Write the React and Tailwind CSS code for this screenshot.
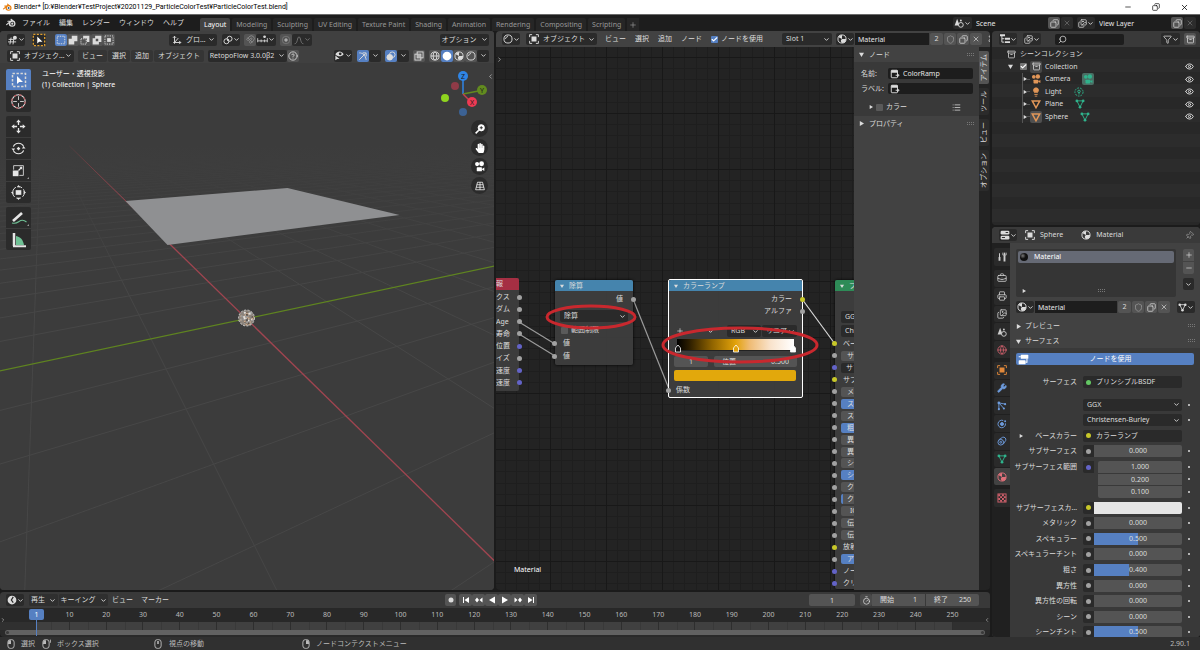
import React, { useState } from "react";
import { clsx } from "clsx";
import {
  Archive,
  BriefcaseBusiness,
  Check as CheckIcon,
  ChevronDown,
  ChevronLeft,
  ChevronRight,
  CircleHelp,
  Copy,
  Eye,
  Filter,
  Globe,
  Images,
  Lightbulb,
  List,
  Magnet,
  Minus,
  Pin,
  Plus,
  Printer,
  Search,
  Shield,
  Timer,
  Wrench,
  X,
} from "lucide-react";
import { FaHandPaper } from "react-icons/fa";

/* ---------- icons ---------- */

function Svg({ children, className = "size-[10px]" }) {
  return (
    <svg
      viewBox="0 0 16 16"
      className={clsx("shrink-0", className)}
      fill="none"
      stroke="currentColor"
      strokeWidth="1.5"
      aria-hidden="true"
    >
      {children}
    </svg>
  );
}

const BlenderLogo = ({ className, color = "currentColor", hole = "#1d1d1d", eye = "currentColor" }) => (
  <Svg className={className}>
    <path d="M1 10.5L9 4M3 5.2h8M8 2l5.2 4" stroke={color} strokeWidth="1.8" strokeLinecap="round" />
    <ellipse cx="9.8" cy="9" rx="5.4" ry="4.8" fill={color} stroke="none" />
    <circle cx="10" cy="9" r="3.1" fill={hole} stroke="none" />
    <circle cx="10" cy="9" r="1.7" fill={eye} stroke="none" />
  </Svg>
);

const ViewportIcon = () => (
  <Svg>
    <path d="M1 7h9M0 11h13M5 4L3 15M9 8l-1 7" />
    <circle cx="11" cy="4.5" r="3.2" fill="currentColor" stroke="none" />
  </Svg>
);

const ObjectModeIcon = ({ className }) => (
  <Svg className={className}>
    <path d="M1 5V1h4M11 1h4v4M15 11v4h-4M5 15H1v-4" />
    <rect x="4" y="4" width="8" height="8" fill="currentColor" stroke="none" />
  </Svg>
);

const SelectBoxIcon = ({ className = "size-[13px]", dash = "#d8d8d8" }) => (
  <Svg className={className}>
    <rect x="1.5" y="1.5" width="13" height="13" stroke={dash} strokeDasharray="2.4 1.6" />
    <path d="M6 4v8l2.2-2H12z" fill="#fff" stroke="none" />
  </Svg>
);

const DashedBox = () => (
  <Svg>
    <rect x="2" y="2" width="12" height="12" strokeDasharray="2.4 1.6" />
  </Svg>
);
const UnionIcon = () => (
  <Svg>
    <path d="M6 1h9v9h-5v5H1V6h5z" fill="currentColor" stroke="none" />
  </Svg>
);
const SubtractIcon = () => (
  <Svg>
    <rect x="1.5" y="6" width="8.5" height="8.5" strokeDasharray="2 1.5" />
    <path d="M5 1h10v10h-4V5H5z" fill="currentColor" stroke="none" />
  </Svg>
);
const InvertIcon = () => (
  <Svg>
    <path d="M5 1h10v10h-4v4H1V5h4zM6 6v4h4V6z" fill="currentColor" fillRule="evenodd" stroke="none" />
  </Svg>
);
const IntersectIcon = () => (
  <Svg>
    <rect x="1.5" y="1.5" width="13" height="13" strokeDasharray="2 1.8" />
    <rect x="5" y="5" width="6" height="6" fill="currentColor" stroke="none" />
  </Svg>
);

const AxesIcon = () => (
  <Svg>
    <path d="M4 14V2M1.500 4.500L4 2l2.500 2.500M2 12h12M11.500 9.500L14 12l-2.500 2.500M4 12l6-7" />
  </Svg>
);
const PivotIcon = () => (
  <Svg>
    <circle cx="5.500" cy="10" r="4" />
    <circle cx="10.500" cy="6" r="4" />
    <circle cx="8" cy="8" r="1.500" fill="currentColor" stroke="none" />
  </Svg>
);
const IncrementIcon = () => (
  <Svg className="size-[11px]">
    <path d="M1 6v6M6 8v4M11 8v4M15 6v6M1 10h14" strokeWidth="1.200" />
    <circle cx="11" cy="4" r="1.200" fill="currentColor" />
  </Svg>
);
const ProportionalIcon = () => (
  <Svg>
    <circle cx="8" cy="8" r="6" opacity=".4" />
    <circle cx="8" cy="8" r="2" fill="currentColor" />
  </Svg>
);
const FalloffIcon = () => (
  <Svg>
    <path d="M1 14c5 0 4-11 7-11s2 11 7 11" />
  </Svg>
);
const VisibilityIcon = () => (
  <Svg className="size-[11px]">
    <path d="M2 6c3-5 9-5 12 0-3 4-9 4-12 0z" fill="currentColor" stroke="none" />
    <circle cx="9" cy="5.500" r="2" fill="#2a2a2a" stroke="none" />
    <path d="M2 8v7l2.500-2H8z" fill="currentColor" stroke="none" />
  </Svg>
);
const GizmoIcon = () => (
  <Svg>
    <path d="M2 3c6 0 10 4 11 11M2 14L12 4M7.500 3H13v5.500" />
  </Svg>
);
const OverlayIcon = () => (
  <Svg>
    <circle cx="6" cy="10" r="4.500" fill="currentColor" />
    <circle cx="10" cy="6" r="4.500" />
  </Svg>
);
const XrayIcon = () => (
  <Svg>
    <rect x="1.500" y="5" width="9.500" height="9.500" />
    <rect x="5" y="1.500" width="9.500" height="9.500" />
    <path d="M8 5v6M5 8h6" />
  </Svg>
);
const WireIcon = () => (
  <Svg>
    <circle cx="8" cy="8" r="6.500" />
    <ellipse cx="8" cy="8" rx="3" ry="6.500" />
    <path d="M1.500 8h13" />
  </Svg>
);
const SolidIcon = () => (
  <Svg>
    <circle cx="8" cy="8" r="7" fill="currentColor" stroke="none" />
  </Svg>
);
const MaterialIcon = ({ className }) => (
  <Svg className={className}>
    <circle cx="8" cy="8" r="6.500" />
    <path d="M8 1.500v6.500h6.500A6.500 6.500 0 0 1 8 14.500C6 12 5 10 8 8L2.500 5A6.500 6.500 0 0 1 8 1.500z" fill="currentColor" stroke="none" />
  </Svg>
);
const RenderedIcon = ({ className }) => (
  <Svg className={className}>
    <circle cx="8" cy="8" r="6.500" />
    <path d="M4 8c0-2 2-4 4-4" />
  </Svg>
);
const SceneIcon = () => (
  <Svg>
    <path d="M5 1L1 12h8z" fill="currentColor" stroke="none" />
    <circle cx="11" cy="11" r="3.800" fill="#2a2a2a" />
    <circle cx="11" cy="4" r="1.500" fill="currentColor" stroke="none" />
  </Svg>
);
const OutlinerIcon = () => (
  <Svg>
    <path d="M3 2v11h4M3 7.500h4" />
    <path d="M0 2h8M8 7.500h8M8 13h8" strokeWidth="3" />
  </Svg>
);
const PropsIcon = () => (
  <Svg>
    <rect x="1" y="1" width="14" height="6" rx="2" fill="currentColor" stroke="none" />
    <rect x="1" y="9" width="14" height="6" rx="2" fill="currentColor" stroke="none" />
    <path d="M9 4h4M3 12h5" stroke="#2a2a2a" />
  </Svg>
);
const NodeIcon = ({ className }) => (
  <Svg className={className}>
    <rect x="2" y="2" width="10" height="12" rx="1" />
    <path d="M2 4h10" strokeWidth="4" />
    <path d="M9 10h6M13 8v4" />
  </Svg>
);
const NodeTreeIcon = () => (
  <Svg className="size-[11px]">
    <rect x="4" y="1" width="11" height="6" rx="1" fill="currentColor" stroke="none" />
    <rect x="1" y="9" width="10" height="6" rx="1" fill="currentColor" stroke="none" />
    <path d="M1 4h3M11 12h2V7" />
  </Svg>
);
const MovieCamera = ({ className }) => (
  <Svg className={className}>
    <g fill="currentColor" stroke="none">
      <circle cx="4.500" cy="4.500" r="3" />
      <circle cx="11" cy="4" r="3.500" />
      <rect x="4" y="9" width="7.500" height="6" rx="1" />
      <path d="M11 12l4-2.500v5z" />
    </g>
  </Svg>
);
const LightData = ({ className }) => (
  <Svg className={className}>
    <circle cx="8" cy="8" r="6.500" strokeDasharray="3 1.500" />
    <circle cx="8" cy="7" r="2" />
    <path d="M8 9v3" />
  </Svg>
);
const MeshObject = ({ className }) => (
  <Svg className={className}>
    <path d="M2 3h12L8 14z" strokeWidth="2.400" />
  </Svg>
);
const MeshData = ({ className }) => (
  <Svg className={className}>
    <path d="M3 3h10L8 13z" />
    <g fill="currentColor" stroke="none">
      <circle cx="3" cy="3" r="2.200" />
      <circle cx="13" cy="3" r="2.200" />
      <circle cx="8" cy="13" r="2.200" />
    </g>
  </Svg>
);
const ToolTab = () => (
  <Svg>
    <path d="M4 2v6M12 1v5" strokeWidth="1.600" />
    <path d="M4 8v6M12 6v9" strokeWidth="3" />
    <path d="M9.500 1v4h5V1" />
  </Svg>
);
const ParticleTab = () => (
  <Svg>
    <path d="M3 3v10M3 3l10 2M3 3l8 9" />
    <g fill="currentColor" stroke="none">
      <circle cx="3" cy="3" r="2.200" />
      <circle cx="13" cy="5" r="1.700" />
      <circle cx="11" cy="12" r="1.700" />
      <circle cx="3" cy="13" r="1.700" />
    </g>
  </Svg>
);
const PhysicsTab = () => (
  <Svg>
    <path d="M10 2.500A6 6 0 1 0 13.500 7" />
    <circle cx="8" cy="8" r="2.400" fill="currentColor" />
    <circle cx="13" cy="3.500" r="1.600" fill="currentColor" stroke="none" />
  </Svg>
);
const ConstraintTab = () => (
  <Svg>
    <circle cx="6" cy="10" r="4.500" />
    <circle cx="6" cy="10" r="1.500" />
    <path d="M3 6l6-4a4 4 0 0 1 5 5l-4 6" />
  </Svg>
);
const TextureTab = () => (
  <Svg>
    <rect x="1.500" y="1.500" width="13" height="13" />
    <path
      d="M2 2h3v3H2zM8 2h3v3H8zM5 5h3v3H5zM11 5h3v3h-3zM2 8h3v3H2zM8 8h3v3H8zM5 11h3v3H5zM11 11h3v3h-3z"
      fill="currentColor"
      stroke="none"
    />
  </Svg>
);
const MouseIcon = ({ button, drag }) => (
  <Svg className="size-[10px]">
    <rect x="3" y="1" width="10" height="14" rx="4" />
    {button === "left" && <path d="M4 2h4v6H3z" fill="currentColor" stroke="none" />}
    {button === "right" && <path d="M8 2h4l1 6H8z" fill="currentColor" stroke="none" />}
    {button === "middle" && <path d="M8 3v5" strokeWidth="2.500" />}
    {drag && <path d="M15 1v5" />}
  </Svg>
);

/* ---------- small controls ---------- */

const Caret = () => <ChevronDown className="size-[7px] shrink-0" strokeWidth={3} />;

function Btn({ children, label, className }) {
  return (
    <button
      type="button"
      aria-label={label}
      className={clsx("flex h-3 shrink-0 items-center justify-center rounded-xs whitespace-nowrap", className)}
    >
      {children}
    </button>
  );
}

function IconMenu({ label, children, className = "w-[18px]" }) {
  return (
    <Btn label={label} className={clsx("bg-[#2a2a2a]", className)}>
      {children}
      <Caret />
    </Btn>
  );
}

function Select({ label, value, icon, className, pad = "pl-1" }) {
  return (
    <span className={clsx("relative flex h-3 shrink-0 items-center rounded-xs bg-[#2a2a2a]", className)}>
      {icon && <span className="pl-[3px]">{icon}</span>}
      <select
        aria-label={label}
        className={clsx("h-full min-w-0 flex-1 appearance-none truncate bg-transparent pr-2 outline-none", pad)}
      >
        <option>{value}</option>
      </select>
      <span className="pointer-events-none absolute right-[2px]">
        <Caret />
      </span>
    </span>
  );
}

function Checkbox({ label, checked = false, children, box = "bg-[#5a5a5a] checked:bg-[#5680c2]" }) {
  const [on, setOn] = useState(checked);
  return (
    <label className="flex items-center gap-[3px] whitespace-nowrap">
      <span className="relative flex size-[7px]">
        <input
          type="checkbox"
          aria-label={label}
          checked={on}
          onChange={() => setOn(!on)}
          className={clsx("size-[7px] appearance-none rounded-[1px]", box)}
        />
        {on && <CheckIcon className="pointer-events-none absolute inset-0 size-[7px] text-white" strokeWidth={4} />}
      </span>
      {children}
    </label>
  );
}

function IdBlock({ label, name, users, faded, icon, iconWidth, className }) {
  return (
    <div className={clsx("flex h-3 items-center gap-px", className)}>
      <IconMenu label={`${label} browse`} className={iconWidth}>
        {icon}
      </IconMenu>
      <input
        aria-label={label}
        defaultValue={name}
        className="h-3 w-0 min-w-0 flex-1 bg-[#1d1d1d] px-[3px] text-[#e6e6e6] outline-none"
      />
      {users && (
        <>
          <Btn label="users" className="w-[13px] rounded-none bg-[#545454]">
            {users}
          </Btn>
          <Btn label="fake user" className="w-3 rounded-none bg-[#545454] text-[#999]">
            <Shield className="size-[9px]" />
          </Btn>
        </>
      )}
      <Btn label="duplicate" className="w-3 rounded-none bg-[#545454]">
        <Copy className="size-[9px] -scale-x-100" />
      </Btn>
      <Btn label="unlink" className={clsx("w-3", faded ? "bg-[#2c2c2c] text-[#777]" : "bg-[#545454]")}>
        <X className="size-2" />
      </Btn>
    </div>
  );
}

const Grip = () => (
  <svg className="h-[4px] w-2 shrink-0 text-[#777]" viewBox="0 0 8 4" fill="currentColor" aria-hidden="true">
    <path d="M0 0h1v1H0zM2 0h1v1H2zM4 0h1v1H4zM6 0h1v1H6zM0 2h1v1H0zM2 2h1v1H2zM4 2h1v1H4zM6 2h1v1H6z" />
  </svg>
);

const Tri = ({ open, className = "size-[5px]" }) => (
  <svg className={clsx("shrink-0", className)} viewBox="0 0 6 6" fill="currentColor" aria-hidden="true">
    <path d={open ? "M0 1h6L3 6z" : "M1 0l5 3-5 3z"} />
  </svg>
);

/* ---------- window chrome ---------- */

function TitleBar() {
  return (
    <div className="flex h-[14px] shrink-0 items-center bg-white px-[3px] text-black">
      <BlenderLogo className="size-[9px]" color="#e87d0d" hole="#fff" eye="#265787" />
      <span className="ml-[2px] [font-family:Roboto,'Noto_Sans_CJK_JP',sans-serif] text-[7px]">
        Blender* [D:¥Blender¥TestProject¥20201129_ParticleColorTest¥ParticleColorTest.blend]
      </span>
      <div className="ml-auto flex items-center gap-5 pr-2">
        <button type="button" aria-label="Minimize">
          <Minus className="size-2" />
        </button>
        <button type="button" aria-label="Restore">
          <Copy className="size-2 -scale-x-100" />
        </button>
        <button type="button" aria-label="Close">
          <X className="size-[9px]" />
        </button>
      </div>
    </div>
  );
}

const WORKSPACES = [
  "Layout",
  "Modeling",
  "Sculpting",
  "UV Editing",
  "Texture Paint",
  "Shading",
  "Animation",
  "Rendering",
  "Compositing",
  "Scripting",
];

function TopBar() {
  return (
    <div className="flex h-[17px] shrink-0 items-center border-t border-[#6a6a6a] bg-[#1d1d1d] pr-1">
      <nav className="flex items-center gap-[9px] pl-[6px]">
        <button type="button" aria-label="Blender" className="-mr-[3px]">
          <BlenderLogo />
        </button>
        {["ファイル", "編集", "レンダー", "ウィンドウ", "ヘルプ"].map((m) => (
          <button type="button" key={m} className="whitespace-nowrap">
            {m}
          </button>
        ))}
      </nav>
      <div className="ml-4 flex items-end gap-[2px] self-end">
        {WORKSPACES.map((w, i) => (
          <button
            type="button"
            key={w}
            className={clsx(
              "h-[13px] rounded-t-xs px-1 whitespace-nowrap",
              i === 0 ? "bg-[#424242] text-white" : "bg-[#262626] text-[#989898]"
            )}
          >
            {w}
          </button>
        ))}
        <button type="button" aria-label="Add workspace" className="flex h-[13px] w-3 items-center justify-center bg-[#262626] text-[#989898]">
          <Plus className="size-2" />
        </button>
      </div>
      <div className="ml-auto flex gap-1">
        <IdBlock label="Scene" name="Scene" faded icon={<SceneIcon />} iconWidth="w-[19px]" className="w-[120px]" />
        <IdBlock label="View Layer" name="View Layer" faded icon={<Images className="size-[9px]" />} iconWidth="w-[18px]" className="w-[119px]" />
      </div>
    </div>
  );
}

/* ---------- 3D viewport ---------- */

// perspective grid: points along each ground axis, joined to the other axis' vanishing point
const ORIGIN = [247, 318];
const VP_X = [42, 120];
const VP_Y = [1158, 121];

function along(vp, t) {
  return [vp[0] + (ORIGIN[0] - vp[0]) / (1 + t), vp[1] + (ORIGIN[1] - vp[1]) / (1 + t)];
}

function gridLine(vp, p) {
  const far = 12;
  return {
    x1: vp[0] + (p[0] - vp[0]) * 0.1,
    y1: vp[1] + (p[1] - vp[1]) * 0.1,
    x2: vp[0] + (p[0] - vp[0]) * far,
    y2: vp[1] + (p[1] - vp[1]) * far,
  };
}

const GRID = [];
for (let k = -7; k <= 50; k++) {
  if (k !== 0) GRID.push(gridLine(VP_X, along(VP_Y, k * 0.095)));
}
for (let k = -6; k <= 60; k++) {
  if (k !== 0) GRID.push(gridLine(VP_Y, along(VP_X, k * 0.11)));
}

const SPECKLES = [];
for (let i = 0; i < 60; i++) {
  const r = 7 * Math.sqrt(((i * 37) % 60) / 60);
  const a = i * i * 1.3;
  SPECKLES.push({ x: 247 + r * Math.cos(a), y: 318 + r * Math.sin(a), c: ["#e8e4de", "#57504a", "#c9a98c", "#9a9a9a"][i % 4] });
}

function Scene3D() {
  return (
    <svg className="absolute inset-0 size-full" viewBox="0 31 495 559" preserveAspectRatio="xMidYMid slice" aria-hidden="true">
      <defs>
        <linearGradient id="fade" x1="0" y1="145" x2="0" y2="290" gradientUnits="userSpaceOnUse">
          <stop offset="0" stopColor="#3c3c3c" />
          <stop offset="1" stopColor="#3c3c3c" stopOpacity="0" />
        </linearGradient>
        <linearGradient id="xaxis" x1="70" y1="146" x2="160" y2="234" gradientUnits="userSpaceOnUse">
          <stop offset="0" stopColor="#a04048" stopOpacity=".15" />
          <stop offset=".6" stopColor="#a04550" />
        </linearGradient>
      </defs>
      <rect x="0" y="31" width="495" height="559" fill="#3c3c3c" />
      <g stroke="#474747" strokeWidth="1">
        {GRID.map((l, i) => (
          <line key={i} {...l} />
        ))}
      </g>
      <rect x="0" y="31" width="495" height="259" fill="url(#fade)" />
      <line x1="70" y1="146" x2="160" y2="234" stroke="url(#xaxis)" />
      <line x1="0" y1="371" x2="495" y2="266" stroke="#5f8420" strokeWidth="1.200" />
      <line x1="160" y1="234" x2="495" y2="561" stroke="#a04550" strokeWidth="1.300" />
      <path d="M126 201L288 188L400 215L168 245z" fill="#8f9092" />
      <circle cx="247" cy="318" r="8" fill="#8b837b" />
      {SPECKLES.map((s, i) => (
        <circle key={i} cx={s.x} cy={s.y} r="1" fill={s.c} />
      ))}
      <circle cx="247" cy="318" r="8" fill="none" stroke="#ddd" strokeWidth=".8" strokeDasharray="2 1.500" />
    </svg>
  );
}

function AxisGizmo() {
  return (
    <svg className="absolute top-[38px] right-[6px] h-[50px] w-[50px]" viewBox="438 69 50 50" aria-label="Axis gizmo">
      <path d="M463 94V76" stroke="#2f85e6" strokeWidth="1.500" />
      <path d="M463 94l18-3.500" stroke="#628b1f" strokeWidth="1.500" />
      <path d="M463 94l8 8" stroke="#c8404f" strokeWidth="1.500" />
      <circle cx="455" cy="86" r="4" fill="#8f3b47" />
      <circle cx="445" cy="98" r="4" fill="#8fd41f" />
      <circle cx="463" cy="112" r="4" fill="#3c6294" />
      <circle cx="463" cy="76" r="5" fill="#2f85e6" />
      <circle cx="482" cy="90" r="5" fill="#628b1f" />
      <circle cx="472" cy="102" r="5" fill="#ee3a53" />
      <g fontSize="7" textAnchor="middle" fill="#1b1b1b">
        <text x="463" y="79">Z</text>
        <text x="482" y="93">Y</text>
        <text x="472" y="105">X</text>
      </g>
    </svg>
  );
}

const Cursor3D = () => (
  <Svg className="size-[17px]">
    <circle cx="8" cy="8" r="6.300" stroke="#e8e8e8" strokeWidth="1" />
    <circle cx="8" cy="8" r="6.300" stroke="#b5484d" strokeWidth="1" strokeDasharray="2.500 2.500" />
    <path d="M8 3v3.500M8 9.500V13M3 8h3.500M9.500 8H13" strokeWidth=".8" />
  </Svg>
);
const MoveTool = () => (
  <Svg className="size-[15px]">
    <path d="M8 3v3.500M8 9.500V13M3 8h3.500M9.500 8H13" strokeWidth="1.400" />
    <path d="M8 .5l2.500 3h-5zM8 15.500l-2.500-3h5zM.5 8l3-2.500v5zM15.500 8l-3 2.500v-5z" fill="currentColor" stroke="none" />
  </Svg>
);
const RotateTool = () => (
  <Svg className="size-[15px]">
    <path d="M2.500 6a6 6 0 0 1 11 0M13.500 10a6 6 0 0 1-11 0" strokeWidth="1.300" />
    <path d="M8 6l2 2-2 2-2-2zM.5 8h4L2.500 10.500zM11.500 8h4l-2-2.500z" fill="currentColor" stroke="none" />
  </Svg>
);
const ScaleTool = () => (
  <Svg className="size-[13px]">
    <path d="M2 7V2h12v12H9" strokeWidth="1" />
    <rect x="1" y="8" width="7" height="7" fill="currentColor" stroke="none" />
    <path d="M8 8l4-4" />
    <path d="M9 3.500h3.500V7z" fill="currentColor" stroke="none" />
  </Svg>
);
const TransformTool = () => (
  <Svg className="size-[15px]">
    <circle cx="8" cy="8" r="6.300" strokeWidth="1" strokeDasharray="5 2" />
    <rect x="5" y="5.500" width="6" height="5" fill="currentColor" stroke="none" />
    <path d="M8 0l1.800 2.500H6.200zM8 16l-1.800-2.500h3.600zM0 8l2.500-1.800v3.600zM16 8l-2.500 1.800V6.200z" fill="currentColor" stroke="none" />
  </Svg>
);
const AnnotateTool = () => (
  <Svg className="size-[16px]">
    <path d="M2 11l9-8" strokeWidth="2.600" />
    <path d="M1 13c4 1 5 0 7-1.500S12 9 15.500 12" stroke="#6fc195" strokeWidth="1.100" />
  </Svg>
);
const MeasureTool = () => (
  <Svg className="size-[16px]">
    <path d="M5 4c5 1 7 4 8 9H5z" fill="#6fc195" stroke="none" />
    <path d="M3 1v13" strokeWidth="2.500" />
    <path d="M2 14.200h13" strokeWidth="2" />
  </Svg>
);

const TOOL_GROUPS = [
  [
    ["Select Box", <SelectBoxIcon className="size-[16px]" />],
    ["Cursor", <Cursor3D />],
  ],
  [
    ["Move", <MoveTool />],
    ["Rotate", <RotateTool />],
    ["Scale", <ScaleTool />],
    ["Transform", <TransformTool />],
  ],
  [
    ["Annotate", <AnnotateTool />],
    ["Measure", <MeasureTool />],
  ],
];

// tools with more variants behind a long press
const HAS_VARIANTS = ["Scale", "Annotate"];

function Toolbar() {
  return (
    <div className="flex w-[25px] flex-col gap-1">
      {TOOL_GROUPS.map((group, g) => (
        <div key={g} className="flex flex-col gap-px overflow-hidden rounded-xs">
          {group.map(([name, icon], i) => (
            <button
              type="button"
              key={name}
              aria-label={name}
              className={clsx(
                "relative flex h-[21px] items-center justify-center text-[#e6e6e6]",
                g === 0 && i === 0 ? "bg-[#5680c2]" : "bg-[#2b2b2b]"
              )}
            >
              {icon}
              {HAS_VARIANTS.includes(name) && (
                <svg className="absolute right-[2px] bottom-[2px] size-[2px]" viewBox="0 0 2 2" aria-hidden="true">
                  <path d="M2 0v2H0z" fill="#999" />
                </svg>
              )}
            </button>
          ))}
        </div>
      ))}
    </div>
  );
}

function Viewport() {
  const nav = [
    ["Zoom", <Svg><circle cx="10" cy="6" r="5" fill="currentColor" /><path d="M6 10l-5 5" strokeWidth="2.500" /><path d="M10 3.500v5M7.500 6h5" stroke="#2b2b2b" /></Svg>],
    ["Pan", <FaHandPaper className="size-[10px]" />],
    ["Camera", <MovieCamera className="size-[11px]" />],
    ["Perspective", <Svg><path d="M4 2h8l3 12H1zM8 2v12M3 6h10M2 10h12" strokeWidth="1.200" /></Svg>],
  ];
  return (
    <section className="relative flex w-0 flex-1 flex-col overflow-hidden rounded-sm bg-[#3c3c3c]">
      <Scene3D />
      <AxisGizmo />
      <div className="relative flex h-[17px] items-center bg-[#404040] pr-[5px] pl-[7px]">
        <IconMenu label="Editor type">
          <ViewportIcon />
        </IconMenu>
        <Btn label="Active tool" className="ml-[7px] bg-[#2a2a2a]">
          <SelectBoxIcon className="size-[14px]" dash="#e0a030" />
        </Btn>
        <div className="ml-[9px] flex">
          {[<DashedBox />, <UnionIcon />, <SubtractIcon />, <InvertIcon />, <IntersectIcon />].map((icon, i) => (
            <Btn key={i} label={`Select mode ${i + 1}`} className={clsx("w-3 rounded-none", i === 0 ? "bg-[#5680c2]" : "bg-[#545454]")}>
              {icon}
            </Btn>
          ))}
        </div>
        <Select label="Transform orientation" value="グロー…" icon={<AxesIcon />} className="ml-[54px] w-[48px]" />
        <IconMenu label="Pivot point" className="ml-[5px] w-[18px]">
          <PivotIcon />
        </IconMenu>
        <Btn label="Snap" className="ml-1 w-3 bg-[#545454] text-[#999]">
          <Magnet className="size-[9px]" />
        </Btn>
        <IconMenu label="Snap to" className="w-5">
          <IncrementIcon />
        </IconMenu>
        <Btn label="Proportional editing" className="ml-1 w-3 bg-[#545454] text-[#aaa]">
          <ProportionalIcon />
        </Btn>
        <IconMenu label="Falloff" className="w-5 text-[#777]">
          <FalloffIcon />
        </IconMenu>
        <Btn className="ml-auto w-[49px] gap-1 bg-[#2a2a2a]">
          オプション
          <Caret />
        </Btn>
      </div>
      <div className="relative flex h-[15px] items-center bg-[#404040] pr-[5px] pl-[7px]">
        <Select label="Mode" value="オブジェク…" icon={<ObjectModeIcon />} className="w-[67px]" />
        <div className="ml-1 flex gap-px">
          {["ビュー", "選択", "追加", "オブジェクト"].map((m) => (
            <Btn key={m} className="bg-[#353535] px-1">
              {m}
            </Btn>
          ))}
        </div>
        <Btn className="ml-1 w-[79px] gap-1 bg-[#2a2a2a]">
          RetopoFlow 3.0.0β2
          <Caret />
        </Btn>
        <Btn label="Help" className="w-3 bg-[#545454]">
          <CircleHelp className="size-[10px]" />
        </Btn>
        <IconMenu label="Visibility" className="ml-auto w-[18px]">
          <VisibilityIcon />
        </IconMenu>
        <Btn label="Gizmos" className="ml-[5px] w-3 bg-[#5680c2]">
          <GizmoIcon />
        </Btn>
        <Btn label="Gizmo options" className="w-3 bg-[#2a2a2a]">
          <Caret />
        </Btn>
        <Btn label="Overlays" className="ml-1 w-3 bg-[#5680c2]">
          <OverlayIcon />
        </Btn>
        <Btn label="Overlay options" className="w-3 bg-[#2a2a2a]">
          <Caret />
        </Btn>
        <Btn label="X-ray" className="ml-1 w-3 bg-[#545454]">
          <XrayIcon />
        </Btn>
        <div className="ml-1 flex">
          {[<WireIcon />, <SolidIcon />, <MaterialIcon />, <RenderedIcon />].map((icon, i) => (
            <Btn key={i} label={`Shading ${i + 1}`} className={clsx("w-3 rounded-none", i === 1 ? "bg-[#5680c2] text-white" : "bg-[#545454]")}>
              {icon}
            </Btn>
          ))}
          <Btn label="Shading options" className="w-3 bg-[#2a2a2a]">
            <Caret />
          </Btn>
        </div>
      </div>
      <div className="relative flex pt-[6px] pr-[6px] pl-[6px]">
        <Toolbar />
        <div className="ml-[11px] text-white">
          <p className="h-[10px]">ユーザー・透視投影</p>
          <p className="mt-px h-[10px]">(1) Collection | Sphere</p>
        </div>
        <div className="mt-[51px] ml-auto flex flex-col gap-[2px]">
          {nav.map(([name, icon]) => (
            <button type="button" key={name} aria-label={name} className="flex size-[17px] items-center justify-center rounded-full bg-[#2b2b2b] text-white">
              {icon}
            </button>
          ))}
        </div>
      </div>
      <ChevronLeft className="absolute top-[42px] right-0 size-[7px]" />
    </section>
  );
}

/* ---------- shader editor ---------- */

const SOCKET = { grey: "bg-[#a1a1a1]", yellow: "bg-[#c7c729]", blue: "bg-[#6363c7]", green: "bg-[#63c763]" };

function Socket({ color = "grey", side }) {
  return (
    <span
      className={clsx(
        "size-[5px] shrink-0 rounded-full",
        SOCKET[color],
        side === "left" && "absolute -left-[3px]",
        side === "right" && "absolute -right-[3px]"
      )}
    />
  );
}

function NodeHeader({ title, className }) {
  return (
    <div className={clsx("flex h-[11px] shrink-0 items-center gap-[5px] rounded-t-xs pl-[5px] whitespace-nowrap", className)}>
      <Tri open className="size-[4px]" />
      {title}
    </div>
  );
}

const PARTICLE_OUT = [
  ["クス", "grey"],
  ["ダム", "grey"],
  ["Age", "grey"],
  ["寿命", "grey"],
  ["位置", "blue"],
  ["イズ", "grey"],
  ["速度", "blue"],
  ["速度", "blue"],
];

function ParticleNode() {
  return (
    <div className="absolute top-[231px] left-0 w-[23px] rounded-r-xs bg-[#3f3f3f]/90">
      <div className="flex h-3 items-center rounded-tr-xs bg-[#a52f43]">報</div>
      <div className="grid h-[101px] grid-rows-8 pt-px pb-[2px]">
        {PARTICLE_OUT.map(([name, color], i) => (
          <div key={i} className="relative flex items-center whitespace-nowrap">
            {name}
            <Socket color={color} side="right" />
          </div>
        ))}
      </div>
    </div>
  );
}

function MathNode() {
  return (
    <div className="absolute top-[233px] left-[59px] w-[78px] rounded-xs bg-[#3f3f3f]/90 pb-[3px] shadow-[0_0_3px_#000]">
      <NodeHeader title="除算" className="bg-[#4584ad]" />
      <div className="relative mt-[2px] flex h-3 items-center justify-end pr-[10px]">
        値
        <Socket side="right" />
      </div>
      <div className="mt-[5px] px-[5px]">
        <Select label="Operation" value="除算" className="w-full" />
      </div>
      <div className="mt-[2px] flex h-3 items-center pl-[6px]">
        <Checkbox>範囲制限</Checkbox>
      </div>
      {[0, 1].map((i) => (
        <div key={i} className="relative mt-px flex h-3 items-center pl-2">
          値
          <Socket side="left" />
        </div>
      ))}
    </div>
  );
}

function RampStop({ x, fill }) {
  return <path d={`M${x - 2.5} 13V9l2.500-3 2.500 3v4z`} fill={fill} stroke="#fff" strokeWidth=".8" />;
}

function RampNode() {
  return (
    <div className="absolute top-[232px] left-[172px] w-[135px] rounded-xs border border-white bg-[#3f3f3f]/90 pb-px">
      <NodeHeader title="カラーランプ" className="bg-[#4584ad]" />
      <div className="relative mt-[2px] flex h-3 items-center justify-end pr-[10px]">
        カラー
        <Socket color="yellow" side="right" />
      </div>
      <div className="relative flex h-3 items-center justify-end pr-[10px]">
        アルファ
        <Socket side="right" />
      </div>
      <div className="mt-2 flex items-center pr-[5px] pl-[7px]">
        <button type="button" aria-label="Add stop">
          <Plus className="size-[8px]" />
        </button>
        <button type="button" aria-label="Tools" className="ml-[23px]">
          <Caret />
        </button>
        <Select label="Color mode" value="RGB" className="ml-auto w-[34px]" />
        <Select label="Interpolation" value="リニア" className="ml-px w-[35px]" />
      </div>
      <svg className="mt-[2px] ml-[5px] h-[14px] w-[123px]" viewBox="0 0 123 14" aria-hidden="true">
        <defs>
          <linearGradient id="ramp">
            <stop offset="0" stopColor="#000" />
            <stop offset=".1" stopColor="#2a1c00" />
            <stop offset=".3" stopColor="#906400" />
            <stop offset=".5" stopColor="#e2a20a" />
            <stop offset=".62" stopColor="#efbb73" />
            <stop offset=".8" stopColor="#f9e3cc" />
            <stop offset="1" stopColor="#fff" />
          </linearGradient>
        </defs>
        <rect x="3" y="0" width="117" height="11" fill="url(#ramp)" />
        <path d="M3 11.500h117" stroke="#222" />
        <RampStop x={4} fill="#111" />
        <RampStop x={62} fill="#e2a20a" />
        <RampStop x={119} fill="#fff" />
      </svg>
      <div className="mt-[3px] flex gap-[6px] px-[5px]">
        <input aria-label="Stop index" defaultValue="1" className="h-[11px] w-[34px] rounded-xs bg-[#545454] text-center" />
        <label className="flex h-[11px] w-0 flex-1 items-center rounded-xs bg-[#545454] px-2">
          位置
          <input defaultValue="0.500" className="w-0 min-w-0 flex-1 text-right" />
        </label>
      </div>
      <button type="button" aria-label="Stop color" className="mx-[5px] mt-[3px] block h-[11px] w-[122px] rounded-xs bg-[#e2a80c]" />
      <div className="relative mt-[3px] flex h-3 items-center pl-[7px]">
        係数
        <Socket side="left" />
      </div>
    </div>
  );
}

// [label, socket colour, kind]
const BSDF_INPUTS = [
  ["ベースカラー", "yellow", "text"],
  ["サブサーフェス", "grey", "field"],
  ["サブサーフェス範囲", "blue", "dark"],
  ["サブサーフェスカラー", "yellow", "text"],
  ["メタリック", "grey", "field"],
  ["スペキュラー", "grey", "blue"],
  ["スペキュラーチント", "grey", "field"],
  ["粗さ", "grey", "blue"],
  ["異方性", "grey", "field"],
  ["異方性の回転", "grey", "field"],
  ["シーン", "grey", "field"],
  ["シーンチント", "grey", "blue"],
  ["クリアコート", "grey", "field"],
  ["クリアコートの粗さ", "grey", "edge"],
  ["IOR", "grey", "ior"],
  ["伝播", "grey", "field"],
  ["伝播の粗さ", "grey", "field"],
  ["放射", "yellow", "text"],
  ["アルファ", "grey", "blue"],
  ["ノーマル", "blue", "text"],
  ["クリアコートノーマル", "blue", "text"],
];

const BSDF_STYLE = {
  text: "pl-0",
  field: "bg-[#545454] ml-[-2px] pl-[6px]",
  dark: "bg-[#2a2a2a] ml-[-2px] pl-[5px]",
  blue: "bg-[#5680c2] ml-[-2px] pl-[6px]",
  edge: "bg-[#545454] border-l-2 border-[#5680c2] ml-[-2px] pl-1",
  ior: "bg-[#545454] ml-[-2px] pl-[9px]",
};

function BsdfNode() {
  return (
    <div className="absolute top-[233px] left-[339px] w-[160px] rounded-xs bg-[#3f3f3f]/90 shadow-[0_0_3px_#000]">
      <NodeHeader title="プリンシプルBSDF" className="bg-[#2e8b57]" />
      <div className="mt-5 flex flex-col gap-[2px] pl-[6px]">
        <Select label="Distribution" value="GGX" className="w-[148px]" />
        <Select label="Subsurface method" value="Christensen-Burley" className="w-[148px]" />
      </div>
      <div className="mt-px grid h-[251px] grid-rows-21">
        {BSDF_INPUTS.map(([name, color, kind]) => (
          <div key={name} className="relative flex items-center pr-[6px] pl-2">
            <Socket color={color} side="left" />
            <span className={clsx("flex h-[10px] flex-1 items-center rounded-xs", BSDF_STYLE[kind])}>{name}</span>
          </div>
        ))}
      </div>
    </div>
  );
}

function NodeCanvas() {
  return (
    <div className="relative w-0 flex-1 overflow-hidden bg-[#232323]">
      <svg className="absolute inset-0 size-full" aria-hidden="true">
        <defs>
          <pattern id="grid" x="54" y="10" width="56" height="56" patternUnits="userSpaceOnUse">
            <path d="M11.500 0v56M22.500 0v56M34.500 0v56M45.500 0v56M0 11.500h56M0 22.500h56M0 34.500h56M0 45.500h56" stroke="#1e1e1e" />
            <path d="M.5 0v56M0 .5h56" stroke="#181818" />
          </pattern>
        </defs>
        <rect width="100%" height="100%" fill="url(#grid)" />
        <g stroke="#9a9a9a" strokeWidth="1.200" fill="none">
          <path d="M23 275L59 297M23 287L59 309M137 252L173 342" />
          <path d="M306 252L339 297" stroke="#d8d8d8" />
        </g>
      </svg>
      <ParticleNode />
      <MathNode />
      <RampNode />
      <BsdfNode />
      <svg className="pointer-events-none absolute top-0 left-0 h-[340px] w-[358px]" aria-hidden="true">
        <g fill="none" stroke="#c9282e" strokeWidth="3">
          <ellipse cx="95" cy="270" rx="44" ry="11" />
          <ellipse cx="244" cy="298" rx="77" ry="17" />
        </g>
      </svg>
      <ChevronRight className="absolute top-[9px] left-0 size-[7px]" />
      <span className="absolute bottom-[15px] left-[18px] text-white">Material</span>
    </div>
  );
}

function NodeSidebar() {
  return (
    <aside className="w-[125px] shrink-0 bg-[#424242]">
      <div className="flex h-[15px] items-center gap-[5px] pr-1 pl-[5px]">
        <Tri open />
        ノード
        <span className="ml-auto">
          <Grip />
        </span>
      </div>
      <div className="flex flex-col gap-1 bg-[#393939] pt-[6px] pr-[6px] pb-[6px] pl-[7px]">
        {[
          ["名前:", "ColorRamp"],
          ["ラベル:", ""],
        ].map(([label, value]) => (
          <label key={label} className="flex h-[11px] items-center">
            <span className="w-[27px]">{label}</span>
            <span className="flex h-[11px] w-0 flex-1 items-center rounded-xs bg-[#1d1d1d] pl-[2px]">
              <NodeIcon />
              <input defaultValue={value} className="w-0 min-w-0 flex-1 pl-[3px] text-[#e6e6e6] outline-none" />
            </span>
          </label>
        ))}
        <div className="flex h-3 items-center gap-[3px] pt-[6px] pr-3 pl-2">
          <Tri className="size-[4px]" />
          <Checkbox>カラー</Checkbox>
          <List className="ml-auto size-[9px]" />
        </div>
      </div>
      <div className="flex h-[15px] items-center gap-[5px] pr-1 pl-[5px]">
        <Tri />
        プロパティ
        <span className="ml-auto">
          <Grip />
        </span>
      </div>
    </aside>
  );
}

function ShaderEditor() {
  return (
    <section className="flex w-0 flex-1 flex-col overflow-hidden rounded-sm">
      <header className="flex h-4 shrink-0 items-center bg-[#424242] pl-[6px]">
        <IconMenu label="Editor type">
          <RenderedIcon />
        </IconMenu>
        <Select label="Shader type" value="オブジェクト" icon={<ObjectModeIcon />} className="ml-[6px] w-[71px]" />
        <div className="ml-2 flex gap-[9px]">
          {["ビュー", "選択", "追加", "ノード"].map((m) => (
            <button type="button" key={m} className="whitespace-nowrap">
              {m}
            </button>
          ))}
        </div>
        <div className="ml-[9px]">
          <Checkbox checked>ノードを使用</Checkbox>
        </div>
        <Select label="Slot" value="Slot 1" className="ml-auto w-[50px]" />
        <IdBlock label="Material" name="Material" users="2" icon={<MaterialIcon />} iconWidth="w-[18px]" className="ml-1 w-[146px]" />
        <span className="ml-[5px] w-[3px] overflow-hidden">
          <Pin className="size-[9px]" />
        </span>
      </header>
      <div className="flex min-h-0 flex-1">
        <NodeCanvas />
        <NodeSidebar />
        <div className="flex w-[11px] shrink-0 flex-col gap-1 bg-[#232323] pt-1">
          {["アイテム", "ツール", "ビュー", "オプション"].map((t, i) => (
            <button
              type="button"
              key={t}
              className={clsx(
                "flex w-[10px] shrink-0 items-center justify-center rounded-r-xs py-[3px]",
                i === 0 ? "bg-[#545454]" : "bg-[#2b2b2b]"
              )}
            >
              <span className="rotate-180 leading-[10px] whitespace-nowrap [text-orientation:sideways] [writing-mode:vertical-rl]">{t}</span>
            </button>
          ))}
        </div>
      </div>
    </section>
  );
}

/* ---------- timeline ---------- */

const FRAMES = Array.from({ length: 25 }, (_, i) => (i + 1) * 10);

const PLAYBACK = [
  ["Jump to start", "M2 2h2v12H2zM14 2v12L5 8z"],
  ["Previous keyframe", "M8 8l-4 5-4-5 4-5zM15 3v10L9 8z"],
  ["Play reverse", "M14 1v14L2 8z"],
  ["Play", "M2 1v14l12-7z"],
  ["Next keyframe", "M8 8l4-5 4 5-4 5zM1 3v10l6-5z"],
  ["Jump to end", "M12 2h2v12h-2zM2 2v12l9-6z"],
];

function Timeline() {
  return (
    <section className="relative mt-[2px] flex h-[45px] shrink-0 flex-col overflow-hidden rounded-sm bg-[#2a2a2a]">
      <header className="flex h-4 shrink-0 items-center bg-[#393939] pr-[11px] pl-[6px]">
        <IconMenu label="Editor type">
          <Svg>
            <circle cx="8" cy="8" r="7" fill="currentColor" stroke="none" />
            <path d="M10 3L7 8l3 4" stroke="#2a2a2a" strokeWidth="2" />
          </Svg>
        </IconMenu>
        <Btn className="ml-[5px] w-[29px] gap-1 bg-[#2f2f2f]">
          再生
          <Caret />
        </Btn>
        <Btn className="ml-px w-[49px] gap-1 bg-[#2f2f2f]">
          キーイング
          <Caret />
        </Btn>
        <button type="button" className="ml-1">ビュー</button>
        <button type="button" className="ml-2">マーカー</button>
        <div className="flex w-0 flex-1 items-center justify-end">
          <div className="flex items-center">
            <Btn label="Auto keying" className="w-[11px] bg-[#545454]">
              <Svg className="size-2">
                <circle cx="8" cy="8" r="5" fill="currentColor" stroke="none" />
              </Svg>
            </Btn>
            <div className="ml-[3px] flex">
              {PLAYBACK.map(([name, d]) => (
                <Btn key={name} label={name} className="w-[13px] rounded-none bg-[#545454] text-white">
                  <Svg className="size-2">
                    <path d={d} fill="currentColor" stroke="none" />
                  </Svg>
                </Btn>
              ))}
            </div>
          </div>
          <input aria-label="Current frame" defaultValue="1" className="ml-[272px] h-3 w-[46px] rounded-xs bg-[#545454] text-center" />
          <Btn label="Use preview range" className="ml-[5px] w-3 bg-[#4a4a4a]">
            <Timer className="size-[9px]" />
          </Btn>
          <label className="flex h-3 w-[53px] items-center bg-[#545454] px-2 whitespace-nowrap">
            開始
            <input defaultValue="1" className="w-0 min-w-0 flex-1 text-right" />
          </label>
          <label className="ml-px flex h-3 w-[53px] items-center rounded-r-xs bg-[#545454] px-2 whitespace-nowrap">
            終了
            <input defaultValue="250" className="w-0 min-w-0 flex-1 text-right" />
          </label>
        </div>
      </header>
      <div className="flex h-[14px] shrink-0 items-center bg-[#282828] pr-[19px] pl-[51px] text-[#bbb]">
        {FRAMES.map((f) => (
          <span key={f} className="w-0 flex-1 text-center">
            {f}
          </span>
        ))}
      </div>
      <div className="flex h-2 shrink-0 bg-[#303030] pr-[19px] pl-[36px]">
        <div className="w-[15px] bg-[#404040]" />
        {FRAMES.map((f) => (
          <span key={f} className="flex w-0 flex-1 border-l border-[#393939]">
            <span className="w-1/2 border-r border-[#2e2e2e] bg-[#404040]" />
            {f !== 250 && <span className="w-1/2 bg-[#404040]" />}
          </span>
        ))}
      </div>
      <div className="mr-[5px] ml-[5px] flex h-[5px] shrink-0 items-center justify-between rounded-full bg-[#626262] px-px">
        <span className="size-[3px] rounded-full bg-[#3a3a3a]" />
        <span className="size-[3px] rounded-full bg-[#3a3a3a]" />
      </div>
      <div className="absolute top-[17px] left-[29px] flex w-[15px] flex-col items-center">
        <span className="h-[11px] w-full rounded-xs bg-[#5680c2] text-center leading-[11px] text-white">1</span>
        <span className="h-4 w-px bg-[#5680c2]" />
      </div>
      <ChevronRight className="absolute top-[25px] left-0 size-[6px]" />
      <ChevronLeft className="absolute top-[25px] right-0 size-[6px]" />
    </section>
  );
}

/* ---------- outliner ---------- */

const OBJECTS = [
  { name: "Camera", icon: <MovieCamera />, data: <MovieCamera />, boxed: true },
  { name: "Light", icon: <Lightbulb className="size-[10px]" fill="currentColor" />, data: <LightData /> },
  { name: "Plane", icon: <MeshObject />, data: <MeshData /> },
  { name: "Sphere", icon: <MeshObject />, data: <MeshData />, active: true },
];

const EyeToggle = ({ name }) => (
  <button type="button" aria-label={`Hide ${name}`} className="ml-auto">
    <Eye className="size-[9px]" strokeWidth={2.5} />
  </button>
);

function Outliner() {
  return (
    <section className="flex h-[194px] shrink-0 flex-col overflow-hidden rounded-sm bg-[#282828]">
      <header className="flex h-4 shrink-0 items-center bg-[#393939] pr-1 pl-[7px]">
        <IconMenu label="Editor type">
          <OutlinerIcon />
        </IconMenu>
        <IconMenu label="Display mode" className="ml-[6px] w-[18px]">
          <Images className="size-[9px]" />
        </IconMenu>
        <label className="ml-[14px] flex h-[11px] w-[69px] items-center rounded-xs bg-[#1d1d1d] pl-[3px]">
          <Search className="size-[9px] -scale-x-100" />
          <input aria-label="Search" className="w-0 min-w-0 flex-1 outline-none" />
        </label>
        <IconMenu label="Filter" className="ml-auto w-[19px]">
          <Filter className="size-[9px]" />
        </IconMenu>
        <Btn label="New collection" className="ml-1 w-3 bg-[#545454]">
          <Archive className="size-[9px]" />
        </Btn>
      </header>
      <div className="min-h-0 flex-1 bg-[repeating-linear-gradient(#282828_0_12px,#2c2c2c_12px_25px)] pt-px">
        <div className="grid h-[75px] grid-rows-6 pr-[6px]">
          <div className="flex items-center gap-1 pl-[15px]">
            <Archive className="size-[9px]" />
            シーンコレクション
          </div>
          <div className="flex items-center pl-4">
            <Tri open />
            <span className="ml-[7px]">
              <Checkbox label="Collection enabled" checked box="bg-[#5a5a5a] checked:bg-[#777]" />
            </span>
            <span className="ml-[3px] flex size-3 items-center justify-center rounded-xs bg-[#484848]">
              <Archive className="size-[9px]" />
            </span>
            <span className="ml-[3px]">Collection</span>
            <EyeToggle name="Collection" />
          </div>
          {OBJECTS.map((o) => (
            <div key={o.name} className="flex items-center pl-[30px]">
              <span className="flex h-full items-center border-l border-[#555]">
                <Tri className="size-[4px]" />
                <span className="h-px w-[3px] bg-[#555]" />
              </span>
              <span className={clsx("flex size-3 items-center justify-center rounded-xs text-[#e19658]", o.active && "bg-[#505050]")}>
                {o.icon}
              </span>
              <span className="ml-[3px]">{o.name}</span>
              <span className={clsx("ml-[11px] flex size-3 items-center justify-center rounded-xs text-[#2fb38c]", o.boxed && "bg-[#4a6e64]")}>
                {o.data}
              </span>
              <EyeToggle name={o.name} />
            </div>
          ))}
        </div>
      </div>
    </section>
  );
}

/* ---------- properties ---------- */

const TAB_GROUPS = [
  { height: "h-[18px]", tabs: [["Tool", "text-[#ccc]", <ToolTab />]] },
  {
    height: "h-[88px]",
    tabs: [
      ["Render", "text-[#ccc]", <BriefcaseBusiness className="size-[10px]" />],
      ["Output", "text-[#ccc]", <Printer className="size-[10px]" />],
      ["View Layer", "text-[#ccc]", <Images className="size-[10px]" />],
      ["Scene", "text-[#ccc]", <SceneIcon />],
      ["World", "text-[#d0606c]", <Globe className="size-[10px]" />],
    ],
  },
  {
    height: "h-[123px]",
    tabs: [
      ["Object", "text-[#e0883a]", <ObjectModeIcon />],
      ["Modifiers", "text-[#6d9bdc]", <Wrench className="size-[10px]" fill="currentColor" />],
      ["Particles", "text-[#6d9bdc]", <ParticleTab />],
      ["Physics", "text-[#6d9bdc]", <PhysicsTab />],
      ["Constraints", "text-[#6d9bdc]", <ConstraintTab />],
      ["Data", "text-[#2fb38c]", <MeshData />],
      ["Material", "text-[#e0707a]", <MaterialIcon />],
    ],
  },
  { height: "h-[18px]", tabs: [["Texture", "text-[#d0606c]", <TextureTab />]] },
];

function PropTabs() {
  return (
    <div className="flex w-[18px] shrink-0 flex-col gap-1 bg-[#202020] pt-[5px] pl-[2px]">
      {TAB_GROUPS.map((g, i) => (
        <div key={i} className={clsx("flex flex-col gap-px", g.height)}>
          {g.tabs.map(([name, color, icon]) => (
            <button
              type="button"
              key={name}
              aria-label={name}
              className={clsx(
                "flex min-h-0 flex-1 items-center justify-center rounded-l-xs",
                color,
                name === "Material" ? "bg-[#424242]" : "bg-[#2a2a2a]"
              )}
            >
              {icon}
            </button>
          ))}
        </div>
      ))}
    </div>
  );
}

function PropRow({ label, arrow, dot = true, children, className = "flex-1" }) {
  return (
    <div className={clsx("flex min-h-0 items-center", className)}>
      <span className="flex w-[67px] shrink-0 items-center justify-end whitespace-nowrap">
        {arrow && <Tri className="mr-auto ml-[9px] size-[4px]" />}
        {label}
      </span>
      <span className="ml-[6px] flex w-0 flex-1 items-center">{children}</span>
      <span className="flex w-[18px] shrink-0 justify-center pr-[4px]">
        {dot && <span className="size-[2px] rounded-full bg-[#ddd]" />}
      </span>
    </div>
  );
}

function Linked({ color, children }) {
  return (
    <button type="button" className="flex h-3 w-full items-center gap-[5px] rounded-xs bg-[#2a2a2a] pl-[3px] text-left">
      <Socket color={color} />
      {children}
    </button>
  );
}

const SocketBox = ({ color }) => (
  <button type="button" aria-label="Socket" className="flex h-3 w-[11px] shrink-0 items-center justify-center rounded-l-xs bg-[#2a2a2a]">
    <Socket color={color} />
  </button>
);

function Slider({ label, value }) {
  const fill = Number(value) * 100;
  return (
    <>
      <SocketBox />
      <span className="relative flex h-3 w-0 flex-1 overflow-hidden rounded-r-xs bg-[#545454]">
        <span className="absolute inset-y-0 left-0 bg-[#5680c2]" style={{ width: `${fill}%` }} />
        <input aria-label={label} defaultValue={value} className="relative w-full text-center outline-none" />
      </span>
    </>
  );
}

const SLIDERS = [
  ["メタリック", "0.000"],
  ["スペキュラー", "0.500"],
  ["スペキュラーチント", "0.000"],
  ["粗さ", "0.400"],
  ["異方性", "0.000"],
  ["異方性の回転", "0.000"],
  ["シーン", "0.000"],
  ["シーンチント", "0.500"],
];

function MaterialPanel() {
  return (
    <div className="flex w-0 flex-1 flex-col overflow-hidden bg-[#424242]">
      <div className="flex gap-[7px] pt-[6px] pr-[6px] pl-[6px]">
        <div className="flex h-[48px] w-0 flex-1 flex-col justify-between rounded-xs bg-[#353535] p-[2px]">
          <button type="button" className="flex h-3 items-center gap-[6px] rounded-xs bg-[#666a75] pl-[2px] text-white">
            <span className="size-2 rounded-full bg-[radial-gradient(circle_at_35%_35%,#777,#111_40%)]" />
            Material
          </button>
          <div className="flex h-2 items-center pl-1">
            <Tri className="size-[4px]" />
            <span className="mr-auto ml-[72px]">
              <Grip />
            </span>
          </div>
        </div>
        <div className="flex flex-col">
          <Btn label="Add slot" className="w-[11px] rounded-b-none bg-[#545454]">
            <Plus className="size-[8px]" />
          </Btn>
          <Btn label="Remove slot" className="mt-px w-[11px] rounded-t-none bg-[#545454]">
            <Minus className="size-[8px]" />
          </Btn>
          <Btn label="Slot specials" className="mt-1 w-[11px] bg-[#2a2a2a]">
            <Caret />
          </Btn>
        </div>
      </div>
      <div className="mt-1 flex items-center pr-[5px] pl-[6px]">
        <IdBlock label="Material name" name="Material" users="2" icon={<MaterialIcon />} iconWidth="w-[18px]" className="w-0 flex-1" />
        <IconMenu label="Link to" className="ml-[7px] w-[18px]">
          <MeshData className="size-[9px]" />
        </IconMenu>
      </div>
      <div className="mt-[5px] flex h-4 items-center gap-1 pr-1 pl-[6px]">
        <Tri />
        プレビュー
        <span className="ml-auto">
          <Grip />
        </span>
      </div>
      <div className="flex h-[14px] items-center gap-1 pr-1 pl-[6px]">
        <Tri open />
        サーフェス
        <span className="ml-auto">
          <Grip />
        </span>
      </div>
      <div className="flex min-h-0 flex-1 flex-col overflow-hidden bg-[#393939] pt-[5px]">
        <button type="button" className="mr-[6px] ml-[6px] flex h-3 shrink-0 items-center rounded-xs bg-[#5680c2] px-[2px] text-white">
          <NodeTreeIcon />
          <span className="flex-1 text-center">ノードを使用</span>
        </button>
        <PropRow label="サーフェス" dot={false} className="mt-[9px] h-4 shrink-0">
          <Linked color="green">プリンシプルBSDF</Linked>
        </PropRow>
        <div className="mt-[7px] flex h-[62px] shrink-0 flex-col">
          <PropRow>
            <Select label="Distribution" value="GGX" className="w-full" />
          </PropRow>
          <PropRow>
            <Select label="Subsurface method" value="Christensen-Burley" className="w-full" />
          </PropRow>
          <PropRow label="ベースカラー" arrow dot={false}>
            <Linked color="yellow">カラーランプ</Linked>
          </PropRow>
          <PropRow label="サブサーフェス">
            <Slider label="サブサーフェス" value="0.000" />
          </PropRow>
        </div>
        <div className="mt-[2px] flex h-[37px] shrink-0">
          <span className="flex h-3 w-[67px] items-center justify-end whitespace-nowrap">サブサーフェス範囲</span>
          <span className="ml-[6px] flex">
            <SocketBox color="blue" />
          </span>
          <div className="ml-1 flex w-0 flex-1 flex-col gap-px overflow-hidden rounded-xs">
            {["1.000", "0.200", "0.100"].map((v, i) => (
              <input key={v} aria-label={`サブサーフェス範囲 ${i + 1}`} defaultValue={v} className="min-h-0 flex-1 bg-[#545454] text-center" />
            ))}
          </div>
          <div className="flex w-[18px] flex-col items-center justify-around pr-[4px]">
            {[0, 1, 2].map((i) => (
              <span key={i} className="size-[2px] rounded-full bg-[#ddd]" />
            ))}
          </div>
        </div>
        <div className="mt-[2px] flex h-[140px] shrink-0 flex-col">
          <PropRow label="サブサーフェスカ…">
            <SocketBox color="yellow" />
            <button type="button" aria-label="サブサーフェスカラー" className="h-3 w-0 flex-1 rounded-r-xs bg-[#e6e6e6]" />
          </PropRow>
          {SLIDERS.map(([label, value]) => (
            <PropRow key={label} label={label}>
              <Slider label={label} value={value} />
            </PropRow>
          ))}
        </div>
      </div>
    </div>
  );
}

function Properties() {
  return (
    <section className="mt-[2px] flex min-h-0 flex-1 flex-col overflow-hidden rounded-sm bg-[#424242]">
      <header className="flex h-4 shrink-0 items-center bg-[#3a3a3a] pr-[6px] pl-[7px]">
        <IconMenu label="Editor type">
          <PropsIcon />
        </IconMenu>
        <span className="ml-2 flex items-center gap-[5px]">
          <ObjectModeIcon />
          Sphere
        </span>
        <span className="ml-[18px] flex items-center gap-[5px]">
          <MaterialIcon />
          Material
        </span>
        <button type="button" aria-label="Pin" className="ml-auto text-[#999]">
          <Pin className="size-[9px] rotate-45" />
        </button>
      </header>
      <div className="flex min-h-0 flex-1">
        <PropTabs />
        <MaterialPanel />
      </div>
    </section>
  );
}

/* ---------- status bar ---------- */

function StatusBar() {
  return (
    <footer className="flex h-[13px] shrink-0 items-center bg-[#303030] pr-[10px] pl-[6px] text-[#bbb]">
      <span className="flex w-[35px] items-center gap-[5px]">
        <MouseIcon button="left" />
        選択
      </span>
      <span className="flex w-[112px] items-center gap-[6px]">
        <MouseIcon button="left" drag />
        ボックス選択
      </span>
      <span className="flex w-[148px] items-center gap-[6px]">
        <MouseIcon button="middle" />
        視点の移動
      </span>
      <span className="flex items-center gap-[5px] whitespace-nowrap">
        <MouseIcon button="right" />
        ノードコンテクストメニュー
      </span>
      <span className="ml-auto">2.90.1</span>
    </footer>
  );
}

function App() {
  return (
    <div className="flex h-screen flex-col overflow-hidden bg-[#1b1b1b] [font-family:'Noto_Sans','Noto_Sans_CJK_JP',sans-serif] text-[7px] leading-[10px] text-[#dcdcdc]">
      <TitleBar />
      <TopBar />
      <main className="flex min-h-0 flex-1 gap-[2px]">
        <div className="flex w-0 flex-1 flex-col">
          <div className="flex min-h-0 flex-1 gap-[2px]">
            <Viewport />
            <ShaderEditor />
          </div>
          <Timeline />
        </div>
        <div className="flex w-[208px] shrink-0 flex-col">
          <Outliner />
          <Properties />
        </div>
      </main>
      <StatusBar />
    </div>
  );
}

export default App;
